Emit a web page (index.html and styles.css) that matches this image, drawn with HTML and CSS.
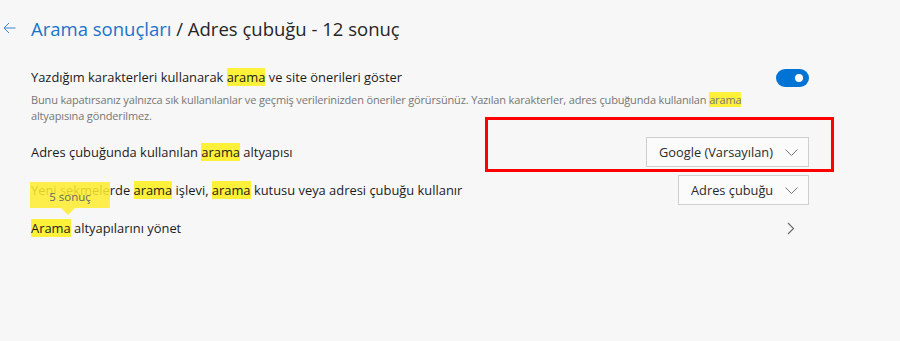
FILE: index.html
```html
<!DOCTYPE html>
<html lang="tr">
<head>
    <meta charset="UTF-8">
    <title>Ayarlar - Adres çubuğu</title>
    <link rel="stylesheet" href="styles.css">
</head>
<body>
    <div class="page">
        <div class="header">
            <span class="back">
                <svg width="13" height="12" viewBox="0 0 13 12"><path d="M6 1 L1 6 L6 11 M1 6 H12.5" fill="none" stroke="#3b86d0" stroke-width="1"/></svg>
            </span>
            <h1><span class="crumb">Arama sonuçları</span> / Adres çubuğu - 12 sonuç</h1>
        </div>

        <div class="settings">
            <div class="row row-toggle">
                <div class="text">
                    <div class="label">Yazdığım karakterleri kullanarak <mark>arama</mark> ve site önerileri göster</div>
                    <div class="desc">Bunu kapatırsanız yalnızca sık kullanılanlar ve geçmiş verilerinizden öneriler görürsünüz. Yazılan karakterler, adres çubuğunda kullanılan <mark>arama</mark> altyapısına gönderilmez.</div>
                </div>
                <span class="toggle"><span class="knob"></span></span>
            </div>

            <div class="row">
                <div class="label">Adres çubuğunda kullanılan <mark>arama</mark> altyapısı</div>
                <button class="select select-wide">Google (Varsayılan) <svg width="13" height="7" viewBox="0 0 13 7"><path d="M0.5 0.5 L6.5 6.5 L12.5 0.5" fill="none" stroke="#777" stroke-width="1"/></svg></button>
                <div class="redbox"></div>
            </div>

            <div class="row">
                <div class="label">Yeni sekmelerde <mark>arama</mark> işlevi, <mark>arama</mark> kutusu veya adresi çubuğu kullanır</div>
                <button class="select">Adres çubuğu <svg width="13" height="7" viewBox="0 0 13 7"><path d="M0.5 0.5 L6.5 6.5 L12.5 0.5" fill="none" stroke="#777" stroke-width="1"/></svg></button>
                <div class="tip">5 sonuç</div>
            </div>

            <div class="row row-link">
                <div class="label"><mark>Arama</mark> altyapılarını yönet</div>
                <svg class="chev" width="8" height="13" viewBox="0 0 8 13"><path d="M1 1 L6.5 6.5 L1 12" fill="none" stroke="#666" stroke-width="1.1"/></svg>
            </div>
        </div>
    </div>
</body>
</html>
```

FILE: styles.css
```css
body {
    margin: 0;
    background: #f7f7f7;
    font-family: "Open Sans", "Noto Sans", sans-serif;
    color: #1b1b1b;
}
.page {
    width: 778px;
    padding: 13px 0 0 31px;
}
.header {
    display: flex;
    align-items: center;
    height: 30px;
    position: relative;
}
.back {
    position: absolute;
    left: -28px;
    top: 4px;
}
h1 {
    margin: 0;
    font-size: 18.5px;
    font-weight: 400;
    color: #262626;
}
.crumb {
    color: #1a73c9;
}
.settings {
    margin-top: 25px;
}
.row {
    position: relative;
    display: flex;
    align-items: center;
    justify-content: space-between;
    height: 38px;
}
.row-toggle {
    align-items: flex-start;
    height: auto;
    padding-bottom: 9px;
}
.label {
    font-size: 12.9px;
}
.desc {
    margin-top: 6px;
    font-size: 11px;
    letter-spacing: -0.15px;
    line-height: 16px;
    color: #767676;
    width: 745px;
}
mark {
    background: #fff03a;
    color: inherit;
}
.toggle {
    display: block;
    width: 38px;
    height: 18px;
    border-radius: 9px;
    background: #0074d4;
    margin-top: 1px;
    position: relative;
}
.knob {
    position: absolute;
    right: 6px;
    top: 5px;
    width: 8px;
    height: 8px;
    border-radius: 50%;
    background: #fff;
}
.select {
    box-sizing: border-box;
    display: flex;
    align-items: center;
    justify-content: space-between;
    width: 131px;
    height: 30px;
    padding: 0 10px 0 12px;
    background: #fbfbfb;
    border: 1px solid #cfcfcf;
    font-family: inherit;
    font-size: 12.8px;
    color: #2b2b2b;
    white-space: nowrap;
}
.select-wide {
    width: 163px;
}
.redbox {
    position: absolute;
    left: 454px;
    top: -16px;
    width: 343px;
    height: 49px;
    border: 3px solid #ff0000;
}
.tip {
    position: absolute;
    left: -1px;
    top: 11px;
    width: 80px;
    height: 26px;
    box-sizing: border-box;
    padding-top: 5px;
    background: rgba(255, 236, 45, 0.85);
    font-size: 11.5px;
    color: #666;
    text-align: center;
    line-height: 20px;
}
.tip::after {
    content: "";
    position: absolute;
    left: 31px;
    bottom: -7px;
    border-left: 7px solid transparent;
    border-right: 7px solid transparent;
    border-top: 7px solid rgba(255, 236, 45, 0.85);
}
.chev {
    margin-right: 14px;
}
```
